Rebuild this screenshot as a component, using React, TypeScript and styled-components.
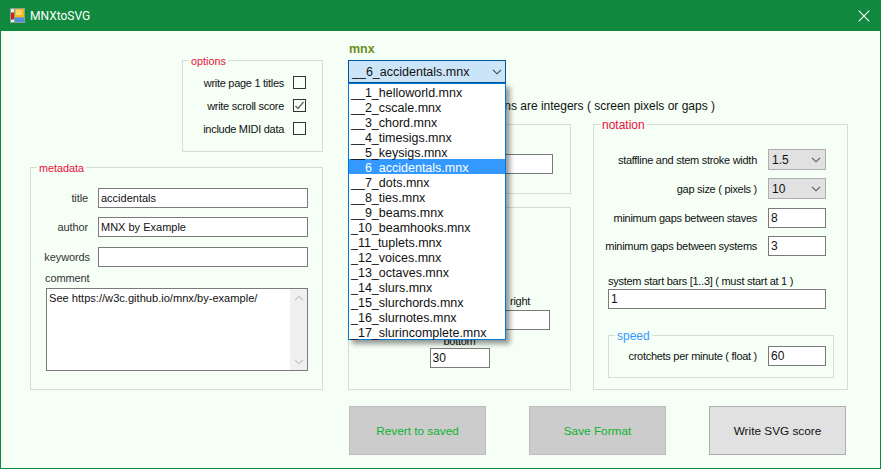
import React from "react";
import styled, { createGlobalStyle } from "styled-components";

const Global = createGlobalStyle`
  html, body { margin: 0; padding: 0; background: #f5fff6; }
  * { box-sizing: border-box; }
`;

const Win = styled.div`
  width: 881px;
  height: 469px;
  display: flex;
  flex-direction: column;
  background: #f5fff6;
  border: 1px solid #10893e;
  border-top: 0;
  font: 11px/14px "Liberation Sans", Arial, sans-serif;
  letter-spacing: -0.28px;
  color: #111;
  overflow: hidden;
`;
const TitleBar = styled.div`
  height: 31px;
  margin: 0 -1px;
  flex: none;
  background: #10893e;
  display: flex;
  align-items: center;
  padding: 0 11px 0 10px;
  gap: 5px;
  color: #fff;
`;
const TitleText = styled.span`
  flex: 1;
  font: 12px Roboto, "Liberation Sans", sans-serif;
  letter-spacing: 0;
`;
const Columns = styled.div`
  display: flex;
  height: 359px;
  padding-left: 29px;
`;
const Col = styled.div<{ $w: number; $ml?: number; $pt?: number }>`
  width: ${(p) => p.$w}px;
  margin-left: ${(p) => p.$ml ?? 0}px;
  padding-top: ${(p) => p.$pt ?? 0}px;
  display: flex;
  flex-direction: column;
  flex: none;
`;
const Group = styled.fieldset<{ $w?: number; $h: number; $mt?: number; $end?: boolean }>`
  margin: ${(p) => p.$mt ?? 0}px 0 0;
  padding: 0;
  min-width: 0;
  width: ${(p) => (p.$w ? `${p.$w}px` : "auto")};
  height: ${(p) => p.$h}px;
  align-self: ${(p) => (p.$end ? "flex-end" : "stretch")};
  border: 1px solid #d6dcd6;
`;
const Legend = styled.legend<{ $blue?: boolean; $small?: boolean }>`
  margin-left: 6px;
  padding: 0 2px;
  height: 14px;
  line-height: 17px;
  font-size: ${(p) => (p.$small ? 10.8 : 12)}px;
  letter-spacing: 0;
  color: ${(p) => (p.$blue ? "#3399ff" : "#e8103c")};
`;
const Stack = styled.div<{ $pt?: number; $pl?: number; $pr?: number; $gap?: number; $items?: string }>`
  display: flex;
  flex-direction: column;
  padding: ${(p) => p.$pt ?? 0}px ${(p) => p.$pr ?? 0}px 0 ${(p) => p.$pl ?? 0}px;
  gap: ${(p) => p.$gap ?? 0}px;
  align-items: ${(p) => p.$items ?? "stretch"};
`;
const CheckRow = styled.div`
  height: 15px;
  display: flex;
  justify-content: flex-end;
  align-items: center;
  gap: 9px;
  white-space: nowrap;
`;
const CheckBox = styled.span`
  width: 13px;
  height: 13px;
  border: 1px solid #333;
  background: #f8fff8;
  display: flex;
`;
const FieldRow = styled.div<{ $mt?: number }>`
  display: flex;
  align-items: center;
  margin-top: ${(p) => p.$mt ?? 0}px;
`;
const FieldLabel = styled.span<{ $pr: number }>`
  width: 67px;
  padding-right: ${(p) => p.$pr}px;
  text-align: right;
  white-space: nowrap;
  color: #333;
  letter-spacing: -0.1px;
`;
const TextBox = styled.input<{ $w: number; $ml?: number; $mt?: number; $small?: boolean }>`
  display: block;
  flex: none;
  width: ${(p) => p.$w}px;
  height: 20px;
  margin: ${(p) => p.$mt ?? 0}px 0 0 ${(p) => p.$ml ?? 0}px;
  padding: 0 2px;
  border: 1px solid #7a7a7a;
  border-radius: 0;
  outline: none;
  background: #fff;
  color: #111;
  letter-spacing: 0;
  font: ${(p) => (p.$small ? 11 : 12)}px "Liberation Sans", Arial, sans-serif;
`;
const CommentLabel = styled.div`
  margin: 4px 0 3px 14px;
  color: #333;
  letter-spacing: -0.1px;
`;
const Memo = styled.div`
  width: 262px;
  height: 83px;
  margin-left: 15px;
  border: 1px solid #7a7a7a;
  background: #fff;
  display: flex;
  justify-content: space-between;
`;
const MemoText = styled.div`
  padding: 2px 2px;
  white-space: nowrap;
  font-size: 11.1px;
  letter-spacing: 0;
`;
const ScrollTrack = styled.div`
  width: 17px;
  background: #f0f0f0;
  display: flex;
  flex-direction: column;
  justify-content: space-between;
  align-items: center;
  padding: 6px 0 5px;
`;
const MnxLabel = styled.div`
  margin: 11px 0 4px 1px;
  font-weight: bold;
  font-size: 12.5px;
  letter-spacing: 0;
  color: #6b8e23;
`;
const ComboWrap = styled.div`
  position: relative;
  width: 158px;
  z-index: 2;
`;
const Combo = styled.div`
  height: 23px;
  border: 1px solid #005499;
  background: #cce4f7;
  display: flex;
  align-items: center;
  justify-content: space-between;
  padding: 0 3px 0 3px;
  font-size: 12.5px;
  letter-spacing: 0;
`;
const DropList = styled.ul`
  position: absolute;
  top: 23px;
  left: 0;
  width: 158px;
  margin: 0;
  padding: 0;
  list-style: none;
  border: 1px solid #0078d7;
  background: #fff;
  box-shadow: 4px 4px 5px rgba(0, 0, 0, 0.4);
`;
const DropItem = styled.li<{ $sel?: boolean }>`
  height: 15px;
  line-height: 18px;
  padding-left: 2px;
  font-size: 12.5px;
  letter-spacing: 0;
  white-space: nowrap;
  background: ${(p) => (p.$sel ? "#3399ff" : "transparent")};
  color: ${(p) => (p.$sel ? "#fff" : "#111")};
`;
const Note = styled.div`
  width: 367px;
  margin-top: 16px;
  text-align: right;
  white-space: nowrap;
  font-size: 12px;
  letter-spacing: 0;
`;
const SmallCaption = styled.div`
  text-align: center;
`;
const OptionRow = styled.div<{ $mt?: number; $pr?: number }>`
  display: flex;
  justify-content: flex-end;
  align-items: center;
  gap: 11px;
  margin-top: ${(p) => p.$mt ?? 0}px;
  padding-right: ${(p) => p.$pr ?? 8}px;
  white-space: nowrap;
`;
const MiniCombo = styled.div`
  flex: none;
  width: 58px;
  height: 21px;
  border: 1px solid #adadad;
  background: #e1e1e1;
  display: flex;
  align-items: center;
  justify-content: space-between;
  padding: 0 4px 0 3px;
  font-size: 12px;
  letter-spacing: 0;
`;
const StartLabel = styled.div`
  margin: 18px 0 1px;
`;
const Footer = styled.div`
  display: flex;
  gap: 43px;
  margin-top: 16px;
  padding-left: 348px;
`;
const Action = styled.button<{ $muted?: boolean }>`
  width: 137px;
  height: 49px;
  padding: 0;
  border: 1px solid ${(p) => (p.$muted ? "#bdbdbd" : "#adadad")};
  background: ${(p) => (p.$muted ? "#cccccc" : "#e1e1e1")};
  color: ${(p) => (p.$muted ? "#0db22c" : "#111")};
  letter-spacing: 0;
  font: 11.8px "Liberation Sans", Arial, sans-serif;
`;

const Chevron = ({ up, color = "#555" }: { up?: boolean; color?: string }) => (
  <svg width="10" height="6" viewBox="0 0 10 6" fill="none" stroke={color} strokeWidth="1.1">
    <path d={up ? "M1 5.2 5 1.2 9 5.2" : "M1 .8 5 4.8 9 .8"} />
  </svg>
);

const AppIcon = () => (
  <svg width="15" height="15" viewBox="0 0 15 15">
    <rect width="15" height="15" fill="#8f9f94" />
    <rect x="1" y="1" width="3" height="3" fill="#e8efe8" />
    <rect x="5" y="1" width="9" height="8" fill="#f3b81f" />
    <rect x="6" y="2" width="6" height="5" fill="#ffd964" />
    <rect x="1" y="5" width="3" height="6" fill="#c9211e" />
    <rect x="5" y="10" width="9" height="4" fill="#4f8fe0" />
    <rect x="1" y="12" width="3" height="2" fill="#e8efe8" />
  </svg>
);

const CloseIcon = () => (
  <svg width="12" height="12" viewBox="0 0 12 12" stroke="#fff" strokeWidth="1.1" fill="none">
    <path d="M.7.7 11.3 11.3M11.3.7.7 11.3" />
  </svg>
);

const Tick = () => (
  <svg width="11" height="11" viewBox="0 0 11 11" fill="none" stroke="#666" strokeWidth="1.4">
    <path d="M1.5 6 4 8.5 9.5 2" />
  </svg>
);

const files = [
  "__1_helloworld.mnx",
  "__2_cscale.mnx",
  "__3_chord.mnx",
  "__4_timesigs.mnx",
  "__5_keysigs.mnx",
  "__6_accidentals.mnx",
  "__7_dots.mnx",
  "__8_ties.mnx",
  "__9_beams.mnx",
  "_10_beamhooks.mnx",
  "_11_tuplets.mnx",
  "_12_voices.mnx",
  "_13_octaves.mnx",
  "_14_slurs.mnx",
  "_15_slurchords.mnx",
  "_16_slurnotes.mnx",
  "_17_slurincomplete.mnx",
];

export default function App() {
  return (
    <Win>
      <Global />
      <TitleBar>
        <AppIcon />
        <TitleText>MNXtoSVG</TitleText>
        <CloseIcon />
      </TitleBar>
      <Columns>
        <Col $w={293} $pt={22}>
          <Group $w={141} $h={99} $end>
            <Legend $small>options</Legend>
            <Stack $pt={8} $pr={16} $gap={8}>
              <CheckRow>write page 1 titles<CheckBox /></CheckRow>
              <CheckRow>write scroll score<CheckBox><Tick /></CheckBox></CheckRow>
              <CheckRow>include MIDI data<CheckBox /></CheckRow>
            </Stack>
          </Group>
          <Group $h={230} $mt={8}>
            <Legend $small>metadata</Legend>
            <Stack $pt={14}>
              <FieldRow>
                <FieldLabel $pr={10}>title</FieldLabel>
                <TextBox $small $w={210} readOnly value="accidentals" />
              </FieldRow>
              <FieldRow $mt={9}>
                <FieldLabel $pr={10}>author</FieldLabel>
                <TextBox $small $w={210} readOnly value="MNX by Example" />
              </FieldRow>
              <FieldRow $mt={10}>
                <FieldLabel $pr={8}>keywords</FieldLabel>
                <TextBox $small $w={210} readOnly value="" />
              </FieldRow>
              <CommentLabel>comment</CommentLabel>
              <Memo>
                <MemoText>See https://w3c.github.io/mnx/by-example/</MemoText>
                <ScrollTrack>
                  <Chevron up color="#c0c0c0" />
                  <Chevron color="#c0c0c0" />
                </ScrollTrack>
              </Memo>
            </Stack>
          </Group>
        </Col>
        <Col $w={223} $ml={25}>
          <MnxLabel>mnx</MnxLabel>
          <ComboWrap>
            <Combo>
              __6_accidentals.mnx
              <Chevron color="#444" />
            </Combo>
            <DropList>
              {files.map((f) => (
                <DropItem key={f} $sel={f === "__6_accidentals.mnx"}>{f}</DropItem>
              ))}
            </DropList>
          </ComboWrap>
          <Note>all dimensions are integers ( screen pixels or gaps )</Note>
          <Group $h={70} $mt={11}>
            <Stack $pt={29} $pr={17} $items="flex-end">
              <TextBox $w={60} readOnly value="" />
            </Stack>
          </Group>
          <Group $h={183} $mt={13}>
            <Stack $pt={86}>
              <Stack $pr={20} $items="flex-end">
                <Stack $gap={2}>
                  <SmallCaption>right</SmallCaption>
                  <TextBox $w={60} readOnly value="" />
                </Stack>
              </Stack>
              <Stack $pt={4} $items="center">
                <Stack>
                  <SmallCaption>bottom</SmallCaption>
                  <TextBox $w={60} readOnly value="30" />
                </Stack>
              </Stack>
            </Stack>
          </Group>
        </Col>
        <Col $w={255} $ml={22} $pt={86}>
          <Group $h={273}>
            <Legend>notation</Legend>
            <Stack $pt={18} $pl={14} $pr={13}>
              <OptionRow>
                staffline and stem stroke width
                <MiniCombo>1.5<Chevron /></MiniCombo>
              </OptionRow>
              <OptionRow $mt={8}>
                gap size ( pixels )
                <MiniCombo>10<Chevron /></MiniCombo>
              </OptionRow>
              <OptionRow $mt={9}>
                minimum gaps between staves
                <TextBox $w={58} readOnly value="8" />
              </OptionRow>
              <OptionRow $mt={8}>
                minimum gaps between systems
                <TextBox $w={58} readOnly value="3" />
              </OptionRow>
              <StartLabel>system start bars [1..3] ( must start at 1 )</StartLabel>
              <TextBox $w={218} readOnly value="1" />
              <Group $h={50} $mt={19}>
                <Legend $blue>speed</Legend>
                <Stack $pt={4}>
                  <OptionRow $pr={7}>
                    crotchets per minute ( float )
                    <TextBox $w={58} readOnly value="60" />
                  </OptionRow>
                </Stack>
              </Group>
            </Stack>
          </Group>
        </Col>
      </Columns>
      <Footer>
        <Action $muted>Revert to saved</Action>
        <Action $muted>Save Format</Action>
        <Action>Write SVG score</Action>
      </Footer>
    </Win>
  );
}
